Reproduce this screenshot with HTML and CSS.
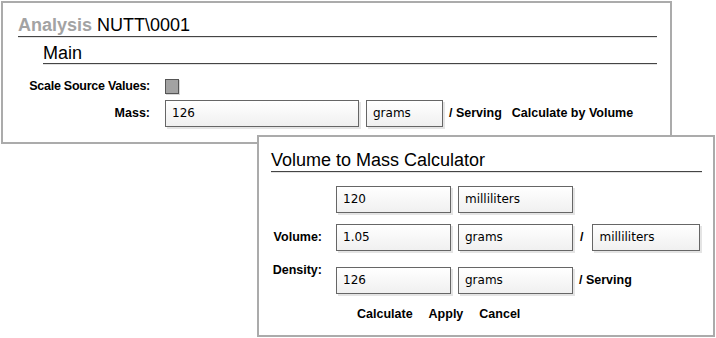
FILE: index.html
```html
<!DOCTYPE html>
<html lang="en">
<head>
<meta charset="UTF-8">
<title>Analysis NUTT\0001</title>
<link rel="stylesheet" href="styles.css">
</head>
<body>

<div class="window main-window">
  <div class="title"><span class="muted">Analysis</span> NUTT\0001</div>
  <div class="subtitle">Main</div>
  <div class="form">
    <div class="label narrow">Scale Source Values:</div>
    <div class="field"><span class="checkbox"></span></div>

    <div class="label">Mass:</div>
    <div class="field">
      <div class="box mass-value">126</div>
      <div class="box unit-small">grams</div>
      <span class="text-label serving">/ Serving</span>
      <span class="text-label link">Calculate by Volume</span>
    </div>
  </div>
</div>

<div class="window calc-window">
  <div class="title">Volume to Mass Calculator</div>
  <div class="calc-form">
    <div class="label"></div>
    <div class="field">
      <div class="box">120</div>
      <div class="box">milliliters</div>
    </div>

    <div class="label row-volume">Volume:</div>
    <div class="field row-volume">
      <div class="box">1.05</div>
      <div class="box">grams</div>
      <span class="text-label slash">/</span>
      <div class="box unit-narrow">milliliters</div>
    </div>

    <div class="label label-top">Density:</div>
    <div class="field row-density">
      <div class="box">126</div>
      <div class="box">grams</div>
      <span class="text-label per">/ Serving</span>
    </div>
  </div>
  <div class="actions">
    <span class="text-label">Calculate</span>
    <span class="text-label">Apply</span>
    <span class="text-label">Cancel</span>
  </div>
</div>

</body>
</html>
```

FILE: styles.css
```css
body {
  margin: 0;
  font-family: "Liberation Sans", Arial, sans-serif;
  color: #000;
  background: #fff;
}
.window {
  box-sizing: border-box;
  background: #fff;
  border: 2px solid #ababab;
}
.main-window {
  margin: 1px;
  width: 671px;
  height: 143px;
  padding-top: 11px;
}
.calc-window {
  position: absolute;
  left: 257px;
  top: 135px;
  width: 458px;
  height: 202px;
  padding-top: 12px;
}
.title {
  font-size: 18px;
  line-height: 22px;
  border-bottom: 1px solid #444;
  box-shadow: 0 1px 0 #e2e2e2;
}
.main-window .title {
  margin: 0 13px 0 15px;
}
.calc-window .title {
  margin: 0 11px 0 12px;
}
.muted {
  color: #a3a3a3;
  font-weight: bold;
}
.subtitle {
  margin: 7px 13px 0 40px;
  font-size: 18px;
  line-height: 19px;
  border-bottom: 1px solid #444;
  box-shadow: 0 1px 0 #e2e2e2;
}
.form {
  display: grid;
  grid-template-columns: 147px auto;
  column-gap: 15px;
  row-gap: 6px;
  margin-top: 15px;
  align-items: center;
}
.calc-form {
  display: grid;
  grid-template-columns: 63px auto;
  column-gap: 14px;
  margin-top: 14px;
  align-items: center;
}
.row-volume {
  margin-top: 11px;
}
.row-density {
  margin-top: 16px;
}
.label-top {
  align-self: start;
  margin-top: 12px;
}
.label,
.text-label {
  font-size: 12.5px;
  font-weight: bold;
  line-height: 15px;
  white-space: nowrap;
}
.label {
  text-align: right;
}
.narrow {
  letter-spacing: -0.25px;
}
.field {
  display: flex;
  align-items: center;
}
.checkbox {
  display: block;
  box-sizing: border-box;
  width: 14px;
  height: 15px;
  background: #a2a2a2;
  border: 1px solid #555;
  box-shadow: 1px 1px 0 #d8d8d8;
}
.box {
  box-sizing: border-box;
  width: 115px;
  height: 27px;
  padding: 0 6px;
  margin-right: 7px;
  border: 1px solid #666;
  background: linear-gradient(#fff, #f0f0f0);
  box-shadow: 2px 2px 0 #e4e4e4;
  font-family: "DejaVu Sans", Verdana, sans-serif;
  font-size: 12px;
  line-height: 25px;
}
.mass-value {
  width: 194px;
}
.unit-small {
  width: 77px;
  margin-right: 6px;
}
.unit-narrow {
  width: 108px;
}
.serving {
  margin-right: 10px;
}
.slash {
  margin-right: 9px;
}
.per {
  margin-left: -1px;
}
.actions {
  display: flex;
  gap: 16px;
  margin: 13px 0 0 98px;
}
```
